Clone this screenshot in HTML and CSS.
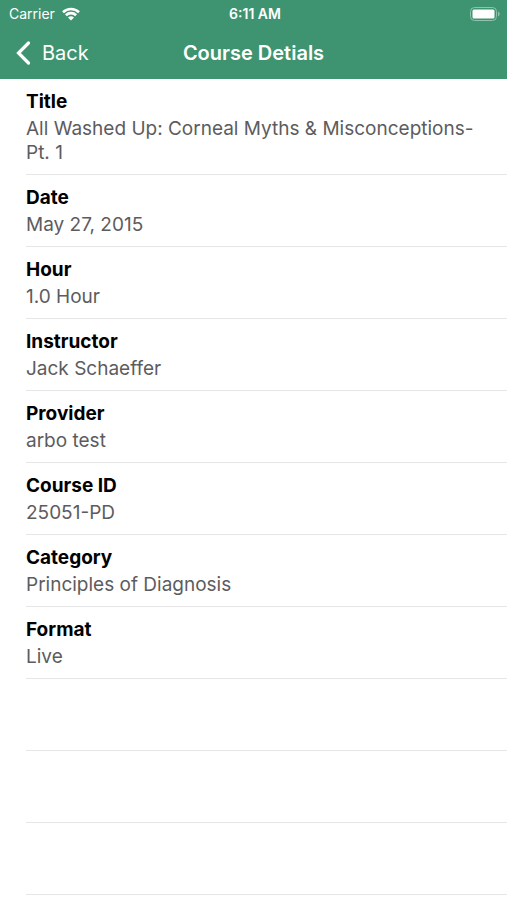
FILE: index.html
```html
<!DOCTYPE html>
<html lang="en">
<head>
    <meta charset="UTF-8">
    <meta name="viewport" content="width=device-width, initial-scale=1.0">
    <title>Course Detials</title>
    <link rel="stylesheet" href="styles.css">
</head>
<body>
    <header class="header">
        <!-- Status bar -->
        <div class="status-bar">
            <div class="carrier">
                <span>Carrier</span>
                <svg class="wifi" viewBox="0 0 18 14" aria-hidden="true">
                    <path d="M1 5.2a11.5 11.5 0 0 1 16 0" />
                    <path d="M3.9 8.2a7.3 7.3 0 0 1 10.2 0" />
                    <path class="wifi-dot" d="M9 13.6 6 10.6a4.4 4.4 0 0 1 6 0z" />
                </svg>
            </div>
            <div class="clock">6:11 AM</div>
            <div class="battery">
                <svg class="battery-icon" viewBox="0 0 31 14" aria-hidden="true">
                    <rect class="battery-case" x="0.5" y="0.5" width="26" height="13" rx="4" />
                    <rect class="battery-level" x="2.5" y="2.5" width="22" height="9" rx="1.5" />
                    <path class="battery-tip" d="M28 4.6c2.2.7 2.2 4.1 0 4.8z" />
                </svg>
            </div>
        </div>

        <!-- Navigation bar -->
        <nav class="nav-bar">
            <a class="back" href="#">
                <svg class="chevron" viewBox="0 0 16 26" aria-hidden="true">
                    <path d="M12.5 3 2.5 13l10 10" />
                </svg>
                Back
            </a>
            <h1 class="nav-title">Course Detials</h1>
        </nav>
    </header>

    <main>
        <dl class="details">
            <div class="row">
                <dt>Title</dt>
                <dd>All Washed Up: Corneal Myths &amp; Misconceptions-Pt. 1</dd>
            </div>
            <div class="row">
                <dt>Date</dt>
                <dd>May 27, 2015</dd>
            </div>
            <div class="row">
                <dt>Hour</dt>
                <dd>1.0 Hour</dd>
            </div>
            <div class="row">
                <dt>Instructor</dt>
                <dd>Jack Schaeffer</dd>
            </div>
            <div class="row">
                <dt>Provider</dt>
                <dd>arbo test</dd>
            </div>
            <div class="row">
                <dt>Course ID</dt>
                <dd>25051-PD</dd>
            </div>
            <div class="row">
                <dt>Category</dt>
                <dd>Principles of Diagnosis</dd>
            </div>
            <div class="row">
                <dt>Format</dt>
                <dd>Live</dd>
            </div>
        </dl>
        <!-- Empty rows -->
        <div class="row"></div>
        <div class="row"></div>
        <div class="row"></div>
    </main>
</body>
</html>
```
FILE: styles.css
```css
* {
    box-sizing: border-box;
}

body {
    margin: 0;
    background-color: #fff;
    font-family: Inter, "Liberation Sans", sans-serif;
}

.header {
    background-color: #3e9470;
    color: #fff;
}

.status-bar {
    display: grid;
    grid-template-columns: 1fr auto 1fr;
    align-items: center;
    height: 27px;
    padding: 0 6px 0 9px;
    font-size: 14px;
}

.carrier {
    display: flex;
    align-items: center;
    gap: 7px;
}

.wifi {
    width: 18px;
    height: 14px;
    fill: none;
    stroke: #fff;
    stroke-width: 2.6;
}

.wifi-dot {
    fill: #fff;
    stroke: none;
}

.clock {
    font-weight: 600;
}

.battery {
    display: flex;
    justify-content: flex-end;
}

.battery-icon {
    width: 31px;
    height: 14px;
}

.battery-case {
    fill: none;
    stroke: #8fc3ad;
}

.battery-level {
    fill: #fff;
}

.battery-tip {
    fill: #8fc3ad;
}

.nav-bar {
    display: grid;
    grid-template-columns: 1fr auto 1fr;
    align-items: center;
    height: 52px;
    padding: 0 16px;
}

.back {
    display: flex;
    align-items: center;
    gap: 10px;
    color: #fff;
    font-size: 20px;
    text-decoration: none;
}

.chevron {
    width: 16px;
    height: 26px;
    fill: none;
    stroke: #fff;
    stroke-width: 3.2;
    stroke-linecap: round;
}

.nav-title {
    margin: 0;
    font-size: 20px;
    font-weight: 600;
}

.details {
    margin: 0;
}

.row {
    min-height: 72px;
    margin-left: 26px;
    padding: 10px 26px 9px 0;
    border-bottom: 1px solid #e6e6e8;
}

dt {
    margin-bottom: 2px;
    color: #000;
    font-size: 19px;
    font-weight: 700;
    line-height: 26px;
}

dd {
    margin: 0;
    color: #5c5c5e;
    font-size: 19px;
    line-height: 24px;
}
```
